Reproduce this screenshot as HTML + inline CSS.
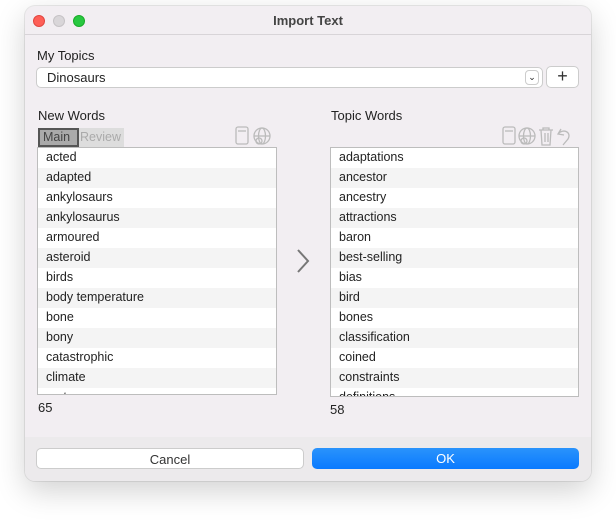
<!DOCTYPE html>
<html><head><style>
*{margin:0;padding:0;box-sizing:border-box}
body{width:616px;height:524px;background:#fff;font-family:"Liberation Sans",sans-serif;font-size:12.5px;color:#222;position:relative;overflow:hidden}
.win{position:absolute;left:25px;top:6px;width:566px;height:475px;background:#f2eef2;border-radius:10px;box-shadow:0 10px 30px rgba(0,0,0,.18),0 0 0 1px rgba(0,0,0,.08);overflow:hidden}
.tb{position:absolute;left:0;top:0;width:100%;height:29px;border-bottom:1px solid #d8d4d8;text-align:center;font-weight:bold;font-size:13px;line-height:29px;color:#444}
.dot{position:absolute;top:9px;width:12px;height:12px;border-radius:50%}
.abs{position:absolute}
.lbl{font-size:13px}
.list{position:absolute;background:#fff;border:1px solid #bdbdbd;overflow:hidden}
.list div{height:20px;line-height:19px;padding-left:8px}
.list div:nth-child(even){background:#f4f4f4}
.foot{position:absolute;left:0;top:431px;width:100%;height:44px;background:#eceaec}
.btn{position:absolute;top:442px;height:21px;border-radius:5px;text-align:center;line-height:21px;font-size:13px}
</style></head><body>
<div class="win">
<div class="tb">Import Text</div>
<div class="dot" style="left:8px;background:#fe5f57;border:1px solid #e14640"></div>
<div class="dot" style="left:28px;background:#d9d6d9;border:1px solid #c6c3c6"></div>
<div class="dot" style="left:48px;background:#28c840;border:1px solid #1aab29"></div>
<div class="abs lbl" style="left:12px;top:42px">My Topics</div>
<div class="abs" style="left:11px;top:61px;width:507px;height:21px;background:#fff;border:1px solid #ccc;border-radius:5px;padding-left:10px;line-height:19px;font-size:13px">Dinosaurs
<div class="abs" style="right:3px;top:2px;width:14px;height:15px;border:1px solid #ccc;border-radius:4px;font-size:9px;line-height:13px;text-align:center;padding-left:0">⌄</div></div>
<div class="abs" style="left:521px;top:60px;width:33px;height:22px;background:#fff;border:1px solid #ccc;border-radius:5px;text-align:center;line-height:19px;font-size:18px;color:#333">+</div>
<div class="abs lbl" style="left:13px;top:102px">New Words</div>
<div class="abs" style="left:13px;top:122px;width:86px;height:19px;background:#ddd"></div>
<div class="abs" style="left:13px;top:122px;width:41px;height:19px;background:#aaa;border:2px solid #555;color:#444;line-height:15px;padding-left:3px">Main</div>
<div class="abs" style="left:55px;top:124px;color:#aaa">Review</div>
<svg class="abs" style="left:208px;top:119px" width="42" height="22" fill="none" stroke="#bbb" stroke-width="1.3"><rect x="3" y="2" width="12" height="17" rx="2"/><line x1="5" y1="6" x2="13" y2="6"/><circle cx="29" cy="11" r="8"/><ellipse cx="29" cy="11" rx="3.5" ry="8"/><line x1="21" y1="11" x2="37" y2="11"/><circle cx="26" cy="16" r="3"/></svg>
<div class="list" style="left:12px;top:141px;width:240px;height:248px">
<div>acted</div><div>adapted</div><div>ankylosaurs</div><div>ankylosaurus</div><div>armoured</div><div>asteroid</div><div>birds</div><div>body temperature</div><div>bone</div><div>bony</div><div>catastrophic</div><div>climate</div><div>cretaceous</div></div>
<div class="abs lbl" style="left:13px;top:394px">65</div>
<svg class="abs" style="left:270px;top:242px" width="16" height="26" fill="none" stroke="#777" stroke-width="2"><path d="M3 2 L13 13 L3 24"/></svg>
<div class="abs lbl" style="left:306px;top:102px">Topic Words</div>
<svg class="abs" style="left:476px;top:119px" width="80" height="22" fill="none" stroke="#bbb" stroke-width="1.3"><rect x="2" y="2" width="12" height="17" rx="2"/><line x1="4" y1="6" x2="12" y2="6"/><circle cx="26" cy="11" r="8"/><ellipse cx="26" cy="11" rx="3.5" ry="8"/><line x1="18" y1="11" x2="34" y2="11"/><circle cx="23" cy="16" r="3"/><path d="M38 5h14M42 5V3h6v2M40 5l1 15h8l1-15M44 8v9M47 8v9"/><path d="M60 4l-3 5 6 1M57 9c5-6 14-2 10 5l-5 6"/></svg>
<div class="list" style="left:305px;top:141px;width:249px;height:250px">
<div>adaptations</div><div>ancestor</div><div>ancestry</div><div>attractions</div><div>baron</div><div>best-selling</div><div>bias</div><div>bird</div><div>bones</div><div>classification</div><div>coined</div><div>constraints</div><div>definitions</div></div>
<div class="abs lbl" style="left:305px;top:396px">58</div>
<div class="foot"></div>
<div class="btn" style="left:11px;width:268px;background:#fff;border:1px solid #ccc;color:#333">Cancel</div>
<div class="btn" style="left:287px;width:267px;background:linear-gradient(#2a93fb,#0a7aff);color:#fff">OK</div>
</div>
</body></html>
